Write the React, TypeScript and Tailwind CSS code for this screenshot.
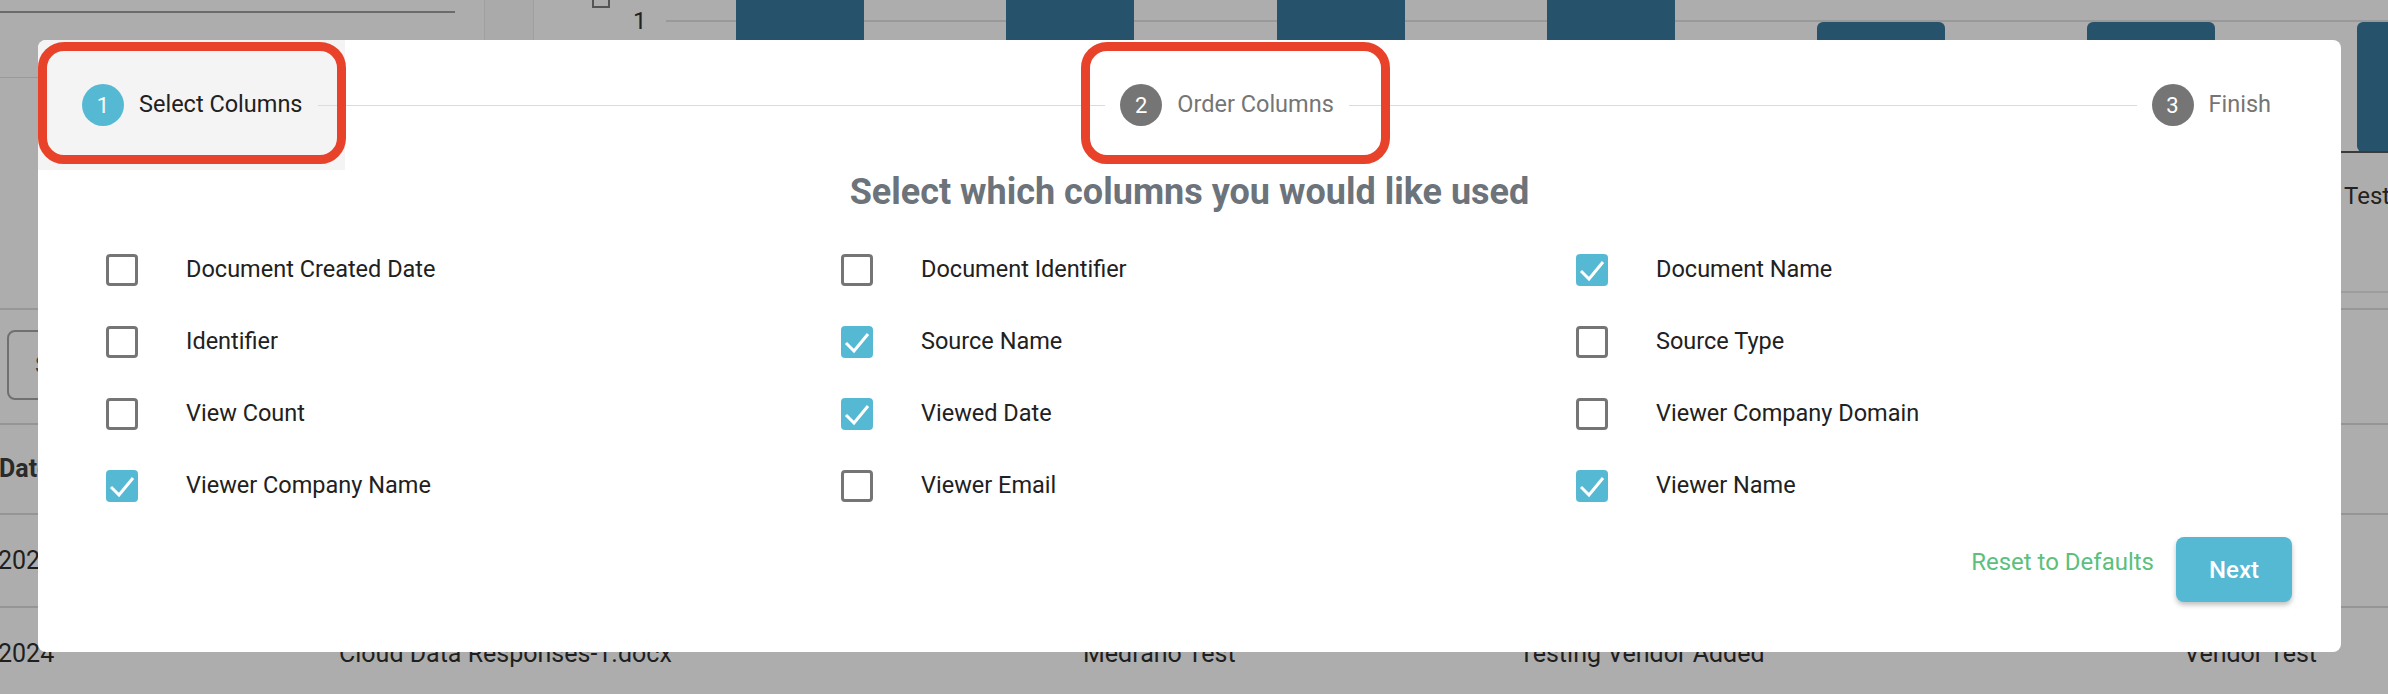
const columns = [
  { label: "Document Created Date", checked: false },
  { label: "Document Identifier", checked: false },
  { label: "Document Name", checked: true },
  { label: "Identifier", checked: false },
  { label: "Source Name", checked: true },
  { label: "Source Type", checked: false },
  { label: "View Count", checked: false },
  { label: "Viewed Date", checked: true },
  { label: "Viewer Company Domain", checked: false },
  { label: "Viewer Company Name", checked: true },
  { label: "Viewer Email", checked: false },
  { label: "Viewer Name", checked: true },
];

const bars = [
  { x: 202, top: -20 },
  { x: 472, top: -20 },
  { x: 743, top: -20 },
  { x: 1013, top: -20 },
  { x: 1283, top: 22 },
  { x: 1553, top: 22 },
  { x: 1823, top: 22 },
];

function Chart() {
  return (
    <svg width="1854" height="310" className="block">
      <rect x="59" y="-4" width="16" height="11" fill="none" stroke="#555" strokeWidth="2" />
      <text x="99" y="29" fontSize="24" fill="#222" fontFamily="Roboto">
        1
      </text>
      <line x1="132" y1="21" x2="1854" y2="21" stroke="#999" strokeWidth="2" />
      {bars.map((b, i) => (
        <rect key={i} x={b.x} y={b.top} width="128" height={152 - b.top} rx="6" fill="#26526b" />
      ))}
      <line x1="0" y1="152" x2="1854" y2="152" stroke="#3a3a3a" strokeWidth="2" />
      <text x="1810" y="204" fontSize="24" fill="#222" fontFamily="Roboto">
        Test
      </text>
      <line x1="0" y1="292" x2="1854" y2="292" stroke="#9d9d9d" strokeWidth="2" />
    </svg>
  );
}

function Checkbox({ checked }: { checked: boolean }) {
  if (checked) {
    return (
      <div className="flex h-[32px] w-[32px] shrink-0 items-center justify-center rounded-[4px] bg-[#56b9d3]">
        <svg width="32" height="32" viewBox="0 0 32 32">
          <path d="M5 17 L13 25 L27 8" fill="none" stroke="#fff" strokeWidth="3" />
        </svg>
      </div>
    );
  }
  return <div className="h-[32px] w-[32px] shrink-0 rounded-[4px] border-[3px] border-[#757575]" />;
}

function Step({ n, label, active }: { n: number; label: string; active?: boolean }) {
  return (
    <div className="relative flex items-center">
      <div
        className={
          active
            ? "flex h-[42px] w-[42px] items-center justify-center rounded-full bg-[#56b9d3] text-[22px] text-white"
            : "flex h-[42px] w-[42px] items-center justify-center rounded-full bg-[#757575] text-[22px] text-white"
        }
      >
        {n}
      </div>
      <span className={active ? "ml-[15px] text-[23.5px] text-[#212121]" : "ml-[15px] text-[23.5px] text-[#757575]"}>
        {label}
      </span>
    </div>
  );
}

export default function App() {
  return (
    <div className="relative h-[694px] w-[2388px] overflow-hidden bg-[#adadad] font-['Roboto',sans-serif]">
      {/* page behind the dialog */}
      <div className="flex h-[310px] border-b-2 border-[#979797]">
        <div className="w-[484px]">
          <div className="mt-[11px] h-[2px] w-[455px] bg-[#6b6b6b]" />
          <div className="mt-[64px] h-px w-full bg-[#9a9a9a]" />
        </div>
        <div className="w-[50px] border-x border-[#a0a0a0] bg-[#a9aaa9]" />
        <Chart />
      </div>
      <div className="h-[113px] pl-[7px] pt-[20px]">
        <div className="flex h-[70px] w-[420px] items-center rounded-[8px] border-2 border-[#707070] pl-[26px] text-[24px] text-[#444]">
          Search
        </div>
      </div>
      <div className="grid h-[92px] grid-cols-[339px_744px_436px_665px_1fr] items-center border-y-2 border-[#959595] text-[25px] font-bold text-[#2a2a2a]">
        <span className="-ml-[1px]">Date</span>
        <span>Document Name</span>
        <span>Viewer Name</span>
        <span>Viewer Company Name</span>
        <span>Source Name</span>
      </div>
      <div className="grid h-[93px] grid-cols-[339px_744px_436px_665px_1fr] items-center border-b-2 border-[#959595] text-[25px] text-[#1f1f1f]">
        <span className="-ml-[2px]">2024</span>
        <span>Cloud Data Responses-1.docx</span>
        <span>Medrano Test</span>
        <span>Testing Vendor Added</span>
        <span>Vendor Test</span>
      </div>
      <div className="grid h-[92px] grid-cols-[339px_744px_436px_665px_1fr] items-center text-[25px] text-[#1f1f1f]">
        <span className="-ml-[2px]">2024</span>
        <span>Cloud Data Responses-1.docx</span>
        <span>Medrano Test</span>
        <span>Testing Vendor Added</span>
        <span>Vendor Test</span>
      </div>

      {/* dialog */}
      <div className="absolute left-[38px] top-[40px] h-[612px] w-[2303px] rounded-[8px] bg-white">
        <div className="relative flex h-[130px] items-center pl-[44px] pr-[70px]">
          <div className="absolute left-0 top-0 h-[130px] w-[307px] rounded-tl-[8px] bg-[#f4f4f4]" />
          <Step n={1} label="Select Columns" active />
          <div className="relative mx-[15px] h-px flex-1 bg-[#dcdcdc]" />
          <Step n={2} label="Order Columns" />
          <div className="relative mx-[15px] h-px flex-1 bg-[#dcdcdc]" />
          <Step n={3} label="Finish" />
        </div>

        <h2 className="mt-[2px] text-center text-[36px] font-bold leading-[40px] text-[#6c737a]">
          Select which columns you would like used
        </h2>

        <div className="mt-[22px] grid grid-cols-[repeat(3,735px)] pl-[68px]">
          {columns.map((c) => (
            <label key={c.label} className="flex h-[72px] items-center">
              <Checkbox checked={c.checked} />
              <span className="ml-[48px] text-[23.5px] text-[#212121]">{c.label}</span>
            </label>
          ))}
        </div>

        <div className="mt-[15px] flex items-start justify-end pr-[49px]">
          <button className="mt-[9px] text-[24px] leading-[32px] text-[#5cbf7d]">Reset to Defaults</button>
          <button className="ml-[22px] h-[65px] w-[116px] rounded-[8px] bg-[#56b9d3] text-[24px] font-medium text-white shadow-[0_3px_5px_rgba(0,0,0,0.25)]">
            Next
          </button>
        </div>

        {/* annotation outlines */}
        <div className="absolute left-0 top-[2px] h-[122px] w-[308px] rounded-[26px] border-[9px] border-[#e8432a]" />
        <div className="absolute left-[1043px] top-[2px] h-[122px] w-[309px] rounded-[26px] border-[9px] border-[#e8432a]" />
      </div>
    </div>
  );
}
